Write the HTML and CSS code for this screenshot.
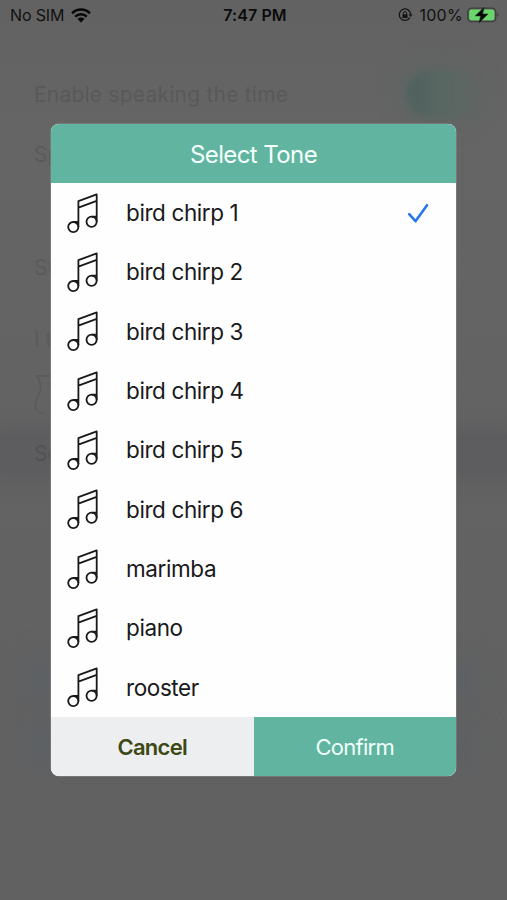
FILE: index.html
```html
<!DOCTYPE html>
<html lang="en">
<head>
<meta charset="utf-8">
<title>Select Tone</title>
<link rel="stylesheet" href="styles.css">
</head>
<body>
<svg class="defs" aria-hidden="true">
  <symbol id="note" viewBox="0 0 34 42">
    <g fill="none" stroke="#19191b" stroke-width="1.8" stroke-linejoin="round">
      <path d="M12.4 35.1V9.2L30.7 2.4V29.8M12.4 15.6L30.7 8.8M7.3 30H12.4M25.6 24.7H30.7"/>
      <circle cx="7.3" cy="35.1" r="5.1"/>
      <circle cx="25.6" cy="29.8" r="5.1"/>
    </g>
  </symbol>
</svg>
<div class="screen">
  <header class="status">
    <div class="carrier">
      <span class="sim">No SIM</span>
      <svg class="wifi" width="20" height="15" viewBox="0 0 20 15">
        <g fill="none" stroke="#070707" stroke-width="2.5">
          <path d="M1 5.3C6.2.3 13.8.3 19 5.3"/>
          <path d="M4.2 8.7C7.5 5.5 12.5 5.5 15.8 8.7"/>
        </g>
        <path fill="#070707" d="M6.5 11C8.5 9.1 11.5 9.1 13.5 11L10 14.5Z"/>
      </svg>
    </div>
    <div class="clock">7:47 PM</div>
    <div class="power">
      <svg width="15" height="14" viewBox="0 0 15 14">
        <path d="M11.9 9.6A5.7 5.7 0 1 1 12.7 6.4" fill="none" stroke="#151515" stroke-width="1.3"/>
        <path d="M10.7 6.2H14.6L12.6 9Z" fill="#151515"/>
        <rect x="4.4" y="6.2" width="5.2" height="3.8" rx=".6" fill="#151515"/>
        <path d="M5.4 6.5V5.2a1.6 1.6 0 0 1 3.2 0V6.5" fill="none" stroke="#151515"/>
      </svg>
      <span class="percent">100%</span>
      <svg width="33" height="17" viewBox="0 0 33 17">
        <rect x=".8" y="1.1" width="28" height="13.6" rx="3.8" fill="none" stroke="#3c3f3c" stroke-width="1.3"/>
        <rect x="2.2" y="2.5" width="25.2" height="10.8" rx="2.3" fill="#68d66b"/>
        <path d="M30.3 5.7c1.8.7 1.8 3.6 0 4.3Z" fill="#414141"/>
        <path d="M17.2.3L8.2 8.9H13.6L12.1 15.8L21.1 7H15.6Z" fill="#050505" stroke="#173619" stroke-width=".6"/>
      </svg>
    </div>
  </header>

  <main class="settings">
    <div class="setting first"><span>Enable speaking the time</span><i class="toggle"></i></div>
    <div class="setting second">Sp</div>
    <div class="setting third">St</div>
    <div class="setting fourth">I t</div>
    <svg class="bell" width="22" height="42" viewBox="0 0 22 42">
      <path d="M1 2H20M4 3C8 13 7 16 3 24C-1 34 2 39 10 39M18 4C15 10 16 14 20 18" fill="none" stroke="#595959" stroke-width="1.4"/>
    </svg>
    <div class="setting selected">Sel</div>
    <div class="notice"><i></i><i></i></div>
  </main>

  <section class="dialog" role="dialog" aria-label="Select Tone">
    <h1 class="title">Select Tone</h1>
    <ul class="tones">
      <li><svg class="note"><use href="#note"/></svg><span>bird chirp 1</span>
        <svg class="check" width="22" height="22" viewBox="0 0 22 22"><path d="M2.2 12.2L8.5 19.2L20 3.2" fill="none" stroke="#2878e8" stroke-width="2.6" stroke-linecap="round" stroke-linejoin="round"/></svg></li>
      <li><svg class="note"><use href="#note"/></svg><span>bird chirp 2</span></li>
      <li><svg class="note"><use href="#note"/></svg><span>bird chirp 3</span></li>
      <li><svg class="note"><use href="#note"/></svg><span>bird chirp 4</span></li>
      <li><svg class="note"><use href="#note"/></svg><span>bird chirp 5</span></li>
      <li><svg class="note"><use href="#note"/></svg><span>bird chirp 6</span></li>
      <li><svg class="note"><use href="#note"/></svg><span>marimba</span></li>
      <li><svg class="note"><use href="#note"/></svg><span>piano</span></li>
      <li><svg class="note"><use href="#note"/></svg><span>rooster</span></li>
    </ul>
    <footer class="actions">
      <button class="cancel">Cancel</button>
      <button class="confirm">Confirm</button>
    </footer>
  </section>
</div>
</body>
</html>
```
FILE: styles.css
```css
* { box-sizing: border-box; }
body {
  margin: 0;
  font-family: Inter, "Liberation Sans", sans-serif;
  background: #636363;
}
.defs { position: absolute; width: 0; height: 0; }
.screen {
  position: relative;
  width: 507px;
  height: 900px;
  overflow: hidden;
  background: linear-gradient(#626262, #656565 15%, #636363 45%, #616161);
}
.status {
  display: grid;
  grid-template-columns: 1fr auto 1fr;
  align-items: center;
  height: 30px;
  padding: 0 7px 0 10px;
  color: #111;
  font-size: 16px;
}
.carrier, .power { display: flex; align-items: center; }
.carrier { gap: 7px; }
.sim { letter-spacing: -.15px; }
.power { justify-content: flex-end; gap: 6px; }
.power .percent { margin-right: -2px; letter-spacing: .3px; }
.clock { font-weight: 600; letter-spacing: .1px; color: #0b0b0b; }

.settings { height: 870px; color: #595959; font-size: 21px; }
.setting { height: 60px; padding: 0 34px; line-height: 60px; }
.first {
  display: flex;
  justify-content: space-between;
  margin-top: 35px;
  padding-right: 32px;
  letter-spacing: .22px;
}
.toggle {
  width: 69px;
  height: 46px;
  margin-top: 6px;
  border-radius: 23px;
  background: linear-gradient(90deg, #52635f 20%, #586762 50%, #606563);
  box-shadow: 0 0 20px 6px #5d6663;
  filter: blur(2px);
}
.third { margin-top: 53px; }
.fourth { margin-top: 12px; }
.bell { display: block; margin: 4px 0 0 34px; }
.selected {
  height: 40px;
  margin-top: 18px;
  background: #5d5d60;
  box-shadow: 0 0 20px 6px #5d5d60;
  line-height: 40px;
}
.second, .third, .fourth { color: #5a5a5a; }
.selected { color: #515154; }
.notice {
  display: flex;
  flex-direction: column;
  gap: 22px;
  margin: 184px 30px 0 25px;
}
.notice i { height: 44px; background: #5d6064; filter: blur(12px); }

.dialog {
  position: absolute;
  top: 124px;
  left: 51px;
  display: flex;
  flex-direction: column;
  width: 405px;
  height: 652px;
  overflow: hidden;
  border-radius: 8px;
  background: #fefefe;
  box-shadow: 0 0 0 .5px #8b8d8c;
}
.title {
  flex: 0 0 59px;
  min-height: 0;
  margin: 0;
  background: #61b5a0;
  color: #f5fffc;
  font-size: 24px;
  font-weight: 400;
  letter-spacing: -.6px;
  line-height: 61px;
  text-align: center;
}
.tones {
  display: grid;
  flex: 1;
  grid-auto-rows: 1fr;
  margin: 0;
  padding: 0;
  list-style: none;
}
.tones li {
  display: flex;
  align-items: center;
  padding: 0 27px 0 15px;
  color: #19191b;
  font-size: 22.5px;
  letter-spacing: -.4px;
}
.note { width: 34px; height: 42px; margin-right: 26px; }
.check { margin-left: auto; }
.actions { display: flex; flex: 0 0 59px; }
.actions button {
  flex: 1;
  padding: 0;
  border: 0;
  font: 400 22px Inter, "Liberation Sans", sans-serif;
  letter-spacing: -.7px;
}
.actions .cancel { background: #edeeef; color: #3c4914; font-weight: 600; }
.actions .confirm { background: #61b5a0; color: #f0fffb; }
```
